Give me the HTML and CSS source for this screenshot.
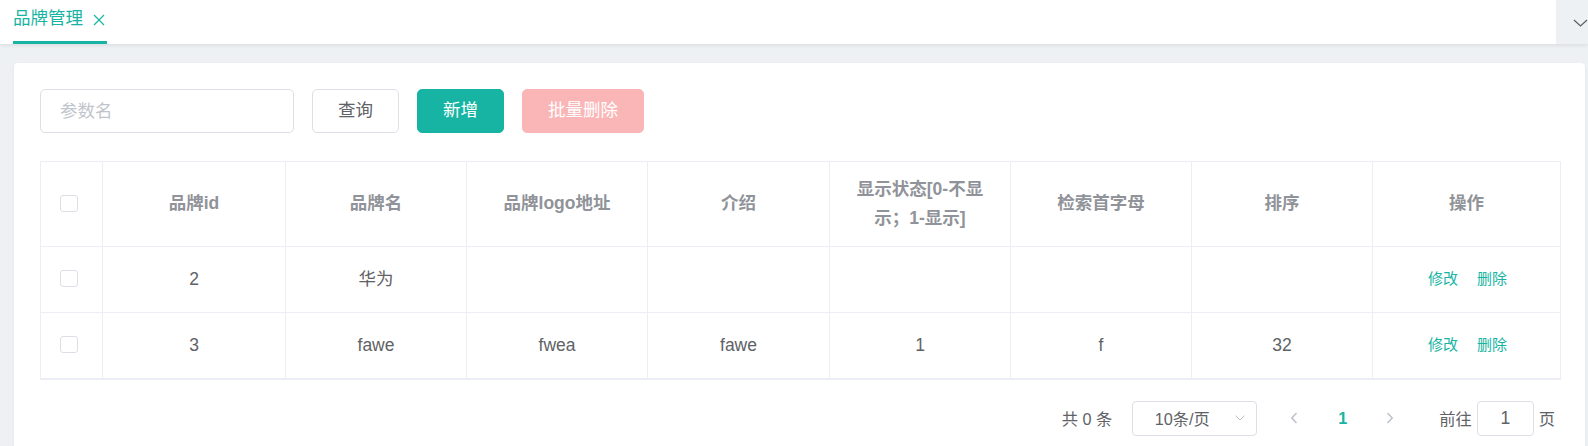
FILE: index.html
```html
<!DOCTYPE html>
<html lang="zh-CN">
<head>
<meta charset="utf-8">
<title>品牌管理</title>
<link rel="stylesheet" href="styles.css">
</head>
<body>
<header class="tabs">
  <div class="tab-list">
    <div class="tab active">
      <span class="tab-label">品牌管理</span>
      <svg class="tab-close" viewBox="0 0 12 12" width="12" height="12"><path d="M1 1 L11 11 M11 1 L1 11" fill="none" stroke="currentColor" stroke-width="1.2"/></svg>
    </div>
  </div>
  <div class="tab-more">
    <svg viewBox="0 0 16 8" width="16" height="8"><path d="M1 0.8 L8 7.2 L15 0.8" fill="none" stroke="#5a5e66" stroke-width="1.3"/></svg>
  </div>
</header>
<main class="main">
  <section class="card">
    <div class="toolbar">
      <div class="input"><input type="text" placeholder="参数名"></div>
      <button class="btn">查询</button>
      <button class="btn btn-primary">新增</button>
      <button class="btn btn-danger-disabled">批量删除</button>
    </div>
    <table class="table">
      <colgroup>
        <col class="c-sel"><col class="c-183"><col class="c-181"><col class="c-181"><col class="c-182"><col class="c-181"><col class="c-181"><col class="c-181"><col class="c-188">
      </colgroup>
      <thead>
        <tr>
          <th class="sel"><span class="checkbox"></span></th>
          <th>品牌id</th>
          <th>品牌名</th>
          <th>品牌logo地址</th>
          <th>介绍</th>
          <th>显示状态[0-不显示；1-显示]</th>
          <th>检索首字母</th>
          <th>排序</th>
          <th>操作</th>
        </tr>
      </thead>
      <tbody>
        <tr>
          <td class="sel"><span class="checkbox"></span></td>
          <td>2</td>
          <td>华为</td>
          <td></td>
          <td></td>
          <td></td>
          <td></td>
          <td></td>
          <td><div class="ops"><a class="link">修改</a><a class="link">删除</a></div></td>
        </tr>
        <tr>
          <td class="sel"><span class="checkbox"></span></td>
          <td>3</td>
          <td>fawe</td>
          <td>fwea</td>
          <td>fawe</td>
          <td>1</td>
          <td>f</td>
          <td>32</td>
          <td><div class="ops"><a class="link">修改</a><a class="link">删除</a></div></td>
        </tr>
      </tbody>
    </table>
    <div class="pagination">
      <span class="total">共 0 条</span>
      <div class="sizes">
        <span class="sizes-text">10条/页</span>
        <svg class="sizes-arrow" viewBox="0 0 10 6" width="10" height="6"><path d="M0.5 0.5 L5 5 L9.5 0.5" fill="none" stroke="#c0c4cc" stroke-width="1"/></svg>
      </div>
      <span class="pg-btn pg-prev"><svg viewBox="0 0 8 12" width="8" height="12"><path d="M6.5 1 L1.8 6 L6.5 11" fill="none" stroke="#c0c4cc" stroke-width="1.6"/></svg></span>
      <span class="pager">1</span>
      <span class="pg-btn pg-next"><svg viewBox="0 0 8 12" width="8" height="12"><path d="M1.5 1 L6.2 6 L1.5 11" fill="none" stroke="#c0c4cc" stroke-width="1.6"/></svg></span>
      <span class="jump-label">前往</span>
      <div class="jump-input">1</div>
      <span class="jump-suffix">页</span>
    </div>
  </section>
</main>
</body>
</html>
```
FILE: styles.css
```css
* { box-sizing: border-box; }
html, body {
  margin: 0;
  padding: 0;
  background: #eef1f3;
  font-family: "Liberation Sans", "Noto Sans CJK SC", sans-serif;
  color: #606266;
  height: 446px;
  overflow: hidden;
}
.tabs {
  height: 44px;
  background: #fff;
  display: flex;
  justify-content: space-between;
  box-shadow: 0 1px 4px rgba(0, 21, 41, 0.1);
  position: relative;
  z-index: 1;
}
.tab-list {
  display: flex;
  padding-left: 13px;
}
.tab {
  display: flex;
  align-items: center;
  gap: 10px;
  height: 44px;
  padding-bottom: 3px;
  border-bottom: 3px solid #18b4a3;
  color: #18b4a3;
  font-size: 17.5px;
  width: 94px;
}
.tab-label { line-height: 1; }
.tab-close { width: 12px; height: 12px; margin-top: 1px; }
.tab-more {
  width: 32px;
  height: 44px;
  background: #eef1f3;
  display: flex;
  align-items: center;
  justify-content: flex-end;
  padding-top: 1px;
}
.tab-more svg { width: 15px; height: 8px; }

.main {
  padding: 19px 3px 0 14px;
}
.card {
  background: #fff;
  border-radius: 4px;
  padding: 26px 25px 20px 26px;
  box-shadow: 0 1px 3px rgba(0, 0, 0, 0.06);
}
.toolbar {
  display: flex;
  align-items: center;
  gap: 18px;
}
.input {
  width: 254px;
  height: 44px;
  border: 1px solid #dcdfe6;
  border-radius: 5px;
  display: flex;
  align-items: center;
}
.input input {
  border: 0;
  outline: 0;
  width: 100%;
  padding: 0 19px;
  font-family: inherit;
  font-size: 17.5px;
  color: #606266;
  background: transparent;
}
.input input::placeholder { color: #c0c4cc; }
.btn {
  height: 44px;
  padding: 0 25px;
  border: 1px solid #dcdfe6;
  border-radius: 5px;
  background: #fff;
  color: #606266;
  font-family: inherit;
  font-size: 17.5px;
  line-height: 1;
}
.btn-primary {
  background: #18b4a3;
  border-color: #18b4a3;
  color: #fff;
}
.btn-danger-disabled {
  background: #fab6b6;
  border-color: #fab6b6;
  color: #fff;
}

.table {
  margin-top: 28px;
  width: 1520px;
  table-layout: fixed;
  border-collapse: collapse;
  border: 1px solid #ebeef5;
  border-bottom: 2px solid #ebeef5;
  font-size: 17.5px;
}
.c-sel { width: 62px; }
.c-183 { width: 183px; }
.c-181 { width: 181px; }
.c-182 { width: 182px; }
.c-188 { width: 188px; }
.table th, .table td {
  border: 1px solid #ebeef5;
  text-align: center;
  line-height: 28.75px;
  padding: 18.2px 12.5px;
}
.table th {
  color: #909399;
  font-weight: bold;
  padding: 13px 12.5px;
}
.table td { color: #606266; }
.table .sel { text-align: left; padding-left: 19px; padding-right: 0; }
.checkbox {
  display: inline-block;
  width: 17.5px;
  height: 17.5px;
  border: 1px solid #dcdfe6;
  border-radius: 3px;
  background: #fff;
  vertical-align: middle;
  margin-top: -3px;
}
.ops {
  display: flex;
  justify-content: center;
  gap: 19px;
  padding-left: 2px;
}
.link {
  color: #18b4a3;
  font-size: 15px;
}

.pagination {
  margin-top: 21px;
  display: flex;
  align-items: center;
  justify-content: flex-end;
  padding-right: 5px;
  font-size: 16.25px;
  color: #606266;
  height: 35px;
}
.total { margin-right: 19.5px; white-space: pre; }
.sizes {
  width: 125px;
  height: 35px;
  border: 1px solid #dcdfe6;
  border-radius: 4px;
  display: flex;
  align-items: center;
  padding: 0 11px 0 22px;
}
.sizes-arrow { margin-left: auto; }
.pg-btn {
  height: 35px;
  display: flex;
  align-items: center;
  justify-content: center;
}
.pg-prev { width: 44px; margin-left: 15px; }
.pager {
  width: 54px;
  text-align: center;
  color: #18b4a3;
  font-weight: bold;
}
.pg-next { width: 41px; }
.jump-label { margin-left: 28.5px; }
.jump-input {
  width: 57px;
  height: 35px;
  margin-left: 5px;
  border: 1px solid #dcdfe6;
  border-radius: 4px;
  display: flex;
  align-items: center;
  justify-content: center;
  font-size: 17.5px;
}
.jump-suffix { margin-left: 5px; }
```
